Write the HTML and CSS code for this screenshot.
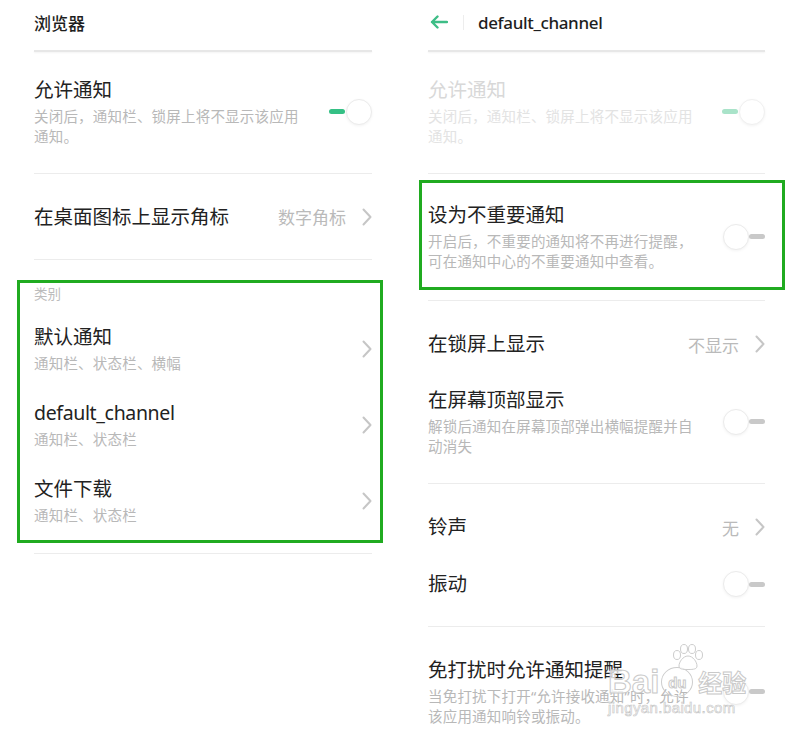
FILE: index.html
```html
<!DOCTYPE html>
<html lang="zh-CN">
<head>
<meta charset="UTF-8" />
<meta name="viewport" content="width=device-width, initial-scale=1" />
<title>通知管理</title>
<link rel="stylesheet" href="styles.css">
</head>
<body>

<div class="page">

  <section class="panel panel-left">
    <header class="bar">
      <h1 class="bar-title">浏览器</h1>
    </header>
    <div class="rule rule-head"></div>

    <div class="row row-allow">
      <div class="text">
        <div class="title">允许通知</div>
        <div class="sub">关闭后，通知栏、锁屏上将不显示该应用<br>通知。</div>
      </div>
      <span class="switch on"><i class="track"></i><i class="knob"></i></span>
    </div>
    <div class="rule"></div>

    <div class="row row-badge">
      <div class="title">在桌面图标上显示角标</div>
      <div class="value">数字角标
        <svg class="chev" width="10" height="18" viewBox="0 0 10 18"><polyline points="1.5,1.5 8.5,9 1.5,16.5" /></svg>
      </div>
    </div>
    <div class="rule"></div>

    <div class="group group-left">
      <div class="group-label">类别</div>
      <div class="row item">
        <div class="text">
          <div class="title">默认通知</div>
          <div class="sub">通知栏、状态栏、横幅</div>
        </div>
        <svg class="chev" width="10" height="18" viewBox="0 0 10 18"><polyline points="1.5,1.5 8.5,9 1.5,16.5" /></svg>
      </div>
      <div class="row item">
        <div class="text">
          <div class="title latin">default_channel</div>
          <div class="sub">通知栏、状态栏</div>
        </div>
        <svg class="chev" width="10" height="18" viewBox="0 0 10 18"><polyline points="1.5,1.5 8.5,9 1.5,16.5" /></svg>
      </div>
      <div class="row item">
        <div class="text">
          <div class="title">文件下载</div>
          <div class="sub">通知栏、状态栏</div>
        </div>
        <svg class="chev" width="10" height="18" viewBox="0 0 10 18"><polyline points="1.5,1.5 8.5,9 1.5,16.5" /></svg>
      </div>
    </div>
    <div class="rule rule-after"></div>
  </section>

  <section class="panel panel-right">
    <header class="bar">
      <svg class="back" width="18" height="14" viewBox="0 0 18 14"><path d="M17 7H2M7.5 1.5L2 7l5.5 5.5" /></svg>
      <span class="bar-sep"></span>
      <h1 class="bar-title latin">default_channel</h1>
    </header>
    <div class="rule rule-head"></div>

    <div class="row row-allow is-disabled">
      <div class="text">
        <div class="title">允许通知</div>
        <div class="sub">关闭后，通知栏、锁屏上将不显示该应用<br>通知。</div>
      </div>
      <span class="switch on"><i class="track"></i><i class="knob"></i></span>
    </div>
    <div class="rule"></div>

    <div class="group group-right">
      <div class="row">
        <div class="text">
          <div class="title">设为不重要通知</div>
          <div class="sub">开启后，不重要的通知将不再进行提醒，<br>可在通知中心的不重要通知中查看。</div>
        </div>
        <span class="switch"><i class="knob"></i><i class="track"></i></span>
      </div>
    </div>
    <div class="rule rule-after"></div>

    <div class="row row-lock">
      <div class="title">在锁屏上显示</div>
      <div class="value">不显示
        <svg class="chev" width="10" height="18" viewBox="0 0 10 18"><polyline points="1.5,1.5 8.5,9 1.5,16.5" /></svg>
      </div>
    </div>

    <div class="row row-top">
      <div class="text">
        <div class="title">在屏幕顶部显示</div>
        <div class="sub">解锁后通知在屏幕顶部弹出横幅提醒并自<br>动消失</div>
      </div>
      <span class="switch"><i class="knob"></i><i class="track"></i></span>
    </div>
    <div class="rule"></div>

    <div class="row row-ring">
      <div class="title">铃声</div>
      <div class="value">无
        <svg class="chev" width="10" height="18" viewBox="0 0 10 18"><polyline points="1.5,1.5 8.5,9 1.5,16.5" /></svg>
      </div>
    </div>

    <div class="row row-vibe">
      <div class="title">振动</div>
      <span class="switch"><i class="knob"></i><i class="track"></i></span>
    </div>
    <div class="rule"></div>

    <div class="row row-dnd">
      <div class="text">
        <div class="title">免打扰时允许通知提醒</div>
        <div class="sub">当免打扰下打开“允许接收通知”时，允许<br>该应用通知响铃或振动。</div>
      </div>
      <span class="switch"><i class="knob"></i><i class="track"></i></span>
    </div>
  </section>

  <!-- site watermark over the corner -->
  <div class="watermark">
    <svg class="paw" width="36" height="26" viewBox="0 0 36 26">
      <ellipse cx="7" cy="11" rx="3.5" ry="4.5" />
      <ellipse cx="14" cy="5" rx="3.5" ry="4.5" />
      <ellipse cx="22" cy="5" rx="3.5" ry="4.5" />
      <ellipse cx="29" cy="11" rx="3.5" ry="4.5" />
      <path d="M18 12c-5 0-9 6-9 10 0 3 3 3.5 9 3.5s9-.5 9-3.5c0-4-4-10-9-10z" />
    </svg>
    <div class="wm-line">
      <span class="wm-bai">Bai</span>
      <span class="wm-du">du</span>
      <span class="wm-cn">经验</span>
    </div>
    <div class="wm-url">jingyan.baidu.com</div>
  </div>

</div>

</body>
</html>
```

FILE: styles.css
```css
body {
  margin: 0;
  background: #fff;
  color: #222;
  font-family: "Noto Sans", "Noto Sans CJK SC", sans-serif;
}

.page {
  display: flex;
  width: 795px;
  height: 733px;
  overflow: hidden;
  position: relative;
}

.panel {
  box-sizing: border-box;
  display: flex;
  flex-direction: column;
}
.panel-left {
  width: 398px;
  padding: 0 26px 0 34px;
}
.panel-right {
  width: 397px;
  padding: 0 30px;
}

/* top bar */
.bar {
  box-sizing: border-box;
  height: 50px;
  padding-bottom: 6px;
  display: flex;
  align-items: center;
}
.bar-title {
  margin: 0;
  font-size: 17px;
  font-weight: 500;
  color: #1e1e1e;
}
.back {
  margin-left: 2px;
  fill: none;
  stroke: #3dbd86;
  stroke-width: 2.4;
  stroke-linecap: round;
  stroke-linejoin: round;
}
.bar-sep {
  width: 1px;
  height: 15px;
  margin: 0 14px 0 15px;
  background: #ededed;
}
.latin {
  letter-spacing: -0.35px;
}

/* dividers */
.rule {
  height: 1px;
  background: #ececec;
  flex: none;
}
.rule-head {
  height: 2px;
  background: #e7e7e7;
  box-shadow: 0 1px 2px rgba(0, 0, 0, 0.05);
}
.rule-after {
  margin-top: 10px;
}

/* rows */
.row {
  display: flex;
  align-items: center;
  justify-content: space-between;
  gap: 12px;
}
.title {
  font-size: 19.5px;
  line-height: 26px;
}
.sub {
  margin-top: 3px;
  font-size: 14.5px;
  line-height: 20px;
  letter-spacing: 0.2px;
  color: #b8b8b8;
}
.value {
  display: flex;
  align-items: center;
  gap: 16px;
  font-size: 17px;
  color: #bababa;
}
.chev {
  flex: none;
  fill: none;
  stroke: #c6c6c6;
  stroke-width: 2;
  stroke-linecap: round;
  stroke-linejoin: round;
}

.row-allow { padding: 25px 0 27px; }
.row-badge { height: 85px; }
.row-lock { height: 86px; }
.row-top { padding: 0 0 27px; }
.row-ring { height: 86px; }
.row-vibe { height: 28px; padding-bottom: 28px; }
.row-dnd { padding-top: 30px; }

.is-disabled .title { color: #d8d8d8; }
.is-disabled .sub { color: #e3e3e3; }
.is-disabled .switch.on .track { background: #a9e3c9; }
.is-disabled .knob { border-color: #f0f0f0; }

/* highlighted groups */
.group {
  border: 3px solid #20ab20;
}
.group-left {
  margin: 20px -11px 0 -17px;
  padding: 1px 8px 8px 14px;
}
.group-right {
  margin: 6px -20px 0 -9px;
  padding: 19px 17px 16px 6px;
}
.group-label {
  font-size: 13.5px;
  line-height: 20px;
  color: #bcbcbc;
}
.item {
  padding: 20px 0 7px;
}

/* switches */
.switch {
  display: flex;
  align-items: center;
  flex: none;
}
.switch i {
  display: block;
}
.knob {
  box-sizing: border-box;
  width: 26px;
  height: 26px;
  border-radius: 50%;
  border: 1px solid #ebebeb;
  background: #fff;
  box-shadow: 0 1px 3px rgba(0, 0, 0, 0.05);
}
.track {
  width: 16px;
  height: 5px;
  border-radius: 3px;
  background: #c9c9c9;
}
.switch.on .track {
  background: #35c085;
  margin-right: 1px;
}

/* watermark */
.watermark {
  position: absolute;
  left: 608px;
  top: 644px;
  width: 150px;
}
.paw {
  position: absolute;
  left: 62px;
  top: 0;
  fill: rgba(255, 255, 255, 0.7);
  stroke: #cdcdcd;
  stroke-width: 1;
}
.wm-line {
  display: flex;
  align-items: center;
  margin-top: 22px;
  color: rgba(255, 255, 255, 0.75);
  -webkit-text-stroke: 1px #c9c9c9;
  font-family: "Liberation Sans", sans-serif;
  font-weight: 700;
}
.wm-bai {
  font-size: 33px;
  line-height: 32px;
}
.wm-du {
  display: flex;
  align-items: center;
  justify-content: center;
  width: 30px;
  height: 28px;
  border: 1.5px solid #cdcdcd;
  border-radius: 50%;
  font-size: 15px;
  margin-left: 2px;
}
.wm-cn {
  font-family: "Noto Sans CJK SC", sans-serif;
  font-size: 24px;
  line-height: 30px;
  margin-left: 5px;
}
.wm-url {
  margin-top: 1px;
  font-family: "Liberation Sans", sans-serif;
  font-size: 15px;
  letter-spacing: 0.4px;
  color: rgba(255, 255, 255, 0.8);
  -webkit-text-stroke: 0.6px #c4c4c4;
}
```
